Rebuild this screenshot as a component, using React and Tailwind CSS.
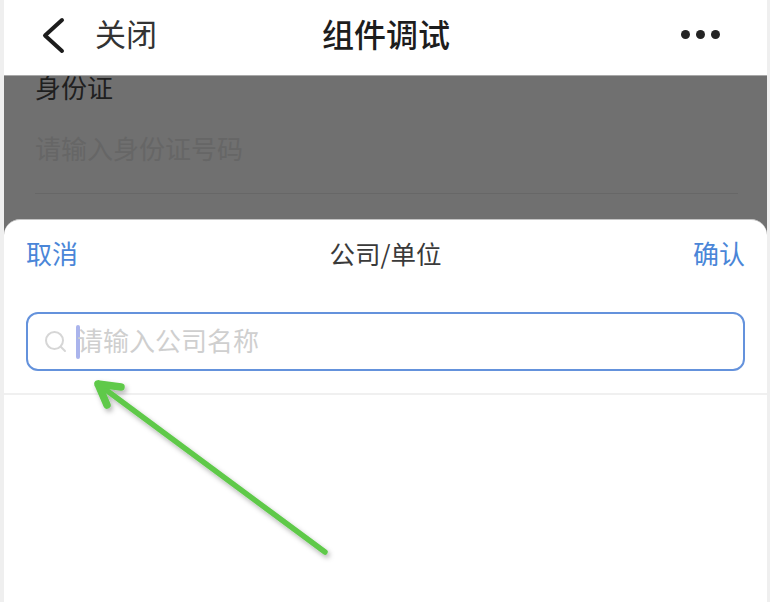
const font = { fontFamily: '"Noto Sans CJK SC", "Liberation Sans", sans-serif' };

export default function App() {
  return (
    <div className="relative h-[602px] w-[770px] overflow-hidden bg-[#efefef] pl-[4px] pr-[3px]" style={font}>
      <div className="flex h-full flex-col bg-white">
        <header className="flex h-[76px] shrink-0 items-center border-b border-[#a8a8a8] pb-[10px] pl-[37px] pr-[47px]">
          <svg width="26" height="38" viewBox="0 0 26 38" fill="none" className="mt-[4px] shrink-0">
            <path d="M21 4 L4 19.5 L21 35" stroke="#1c1c1c" strokeWidth="4" strokeLinecap="round" strokeLinejoin="round" />
          </svg>
          <span className="ml-[28px] w-[170px] text-[31px] leading-none text-[#333333]">关闭</span>
          <span className="ml-[57px] flex-1 text-[32px] font-medium leading-none text-[#1d1d1d]">组件调试</span>
          <div className="mt-[4px] flex items-center gap-[6px]">
            <span className="h-[9px] w-[9px] rounded-full bg-[#242424]" />
            <span className="h-[9px] w-[9px] rounded-full bg-[#242424]" />
            <span className="h-[9px] w-[9px] rounded-full bg-[#242424]" />
          </div>
        </header>

        <section className="flex h-[144px] shrink-0 flex-col overflow-hidden bg-[#707070] pl-[31px] pr-[29px]">
          <div className="-mt-[2px] text-[26px] leading-[26px] text-[#1f1f1f]">身份证</div>
          <div className="mt-[33px] text-[26px] leading-[30px] text-[#666666]">请输入身份证号码</div>
          <div className="mt-[30px] h-px bg-[#676767]" />
        </section>

        <div className="-mt-px flex flex-1 flex-col bg-[#707070]">
          <section className="flex flex-1 flex-col rounded-t-[16px] border-t border-[#c4c4c4] bg-white">
            <div className="flex h-[66px] shrink-0 items-center justify-between px-[22px]">
              <span className="text-[26px] leading-none text-[#4a86d8]">取消</span>
              <span className="text-[25.5px] leading-none text-[#3a3a3a]">公司/单位</span>
              <span className="text-[26px] leading-none text-[#4a86d8]">确认</span>
            </div>
            <div className="mt-[26px] px-[22px]">
              <div className="flex h-[59px] items-center rounded-[12px] border-2 border-[#6492dc] pl-[16px]">
                <svg width="24" height="24" viewBox="0 0 24 24" fill="none" className="shrink-0">
                  <circle cx="10.5" cy="10.5" r="8.5" stroke="#d6d6d6" strokeWidth="2" />
                  <path d="M17 17 L21 21" stroke="#d6d6d6" strokeWidth="2" strokeLinecap="round" />
                </svg>
                <span className="ml-[8px] h-[34px] w-[4px] shrink-0 rounded-sm bg-[#aab4ec]" />
                <span className="-ml-[3px] pb-[4px] text-[26px] leading-none text-[#cfcfcf]">请输入公司名称</span>
              </div>
            </div>
            <div className="mt-[22px] h-[2px] bg-[#f0f0f0]" />
          </section>
        </div>
      </div>

      <svg className="pointer-events-none absolute left-[90px] top-[375px]" width="250" height="190" viewBox="0 0 250 190" fill="none">
        <defs>
          <filter id="arrow-shadow" x="-10%" y="-10%" width="120%" height="120%">
            <feDropShadow dx="2" dy="3" stdDeviation="2.5" floodColor="#000000" floodOpacity="0.3" />
          </filter>
        </defs>
        <g stroke="#5ec94a" strokeLinecap="round" strokeLinejoin="round" filter="url(#arrow-shadow)">
          <path d="M8 9 L235 177" strokeWidth="5.5" />
          <path d="M8 9 L31 12 M8 9 L17 30" strokeWidth="7.5" />
        </g>
      </svg>
    </div>
  );
}
